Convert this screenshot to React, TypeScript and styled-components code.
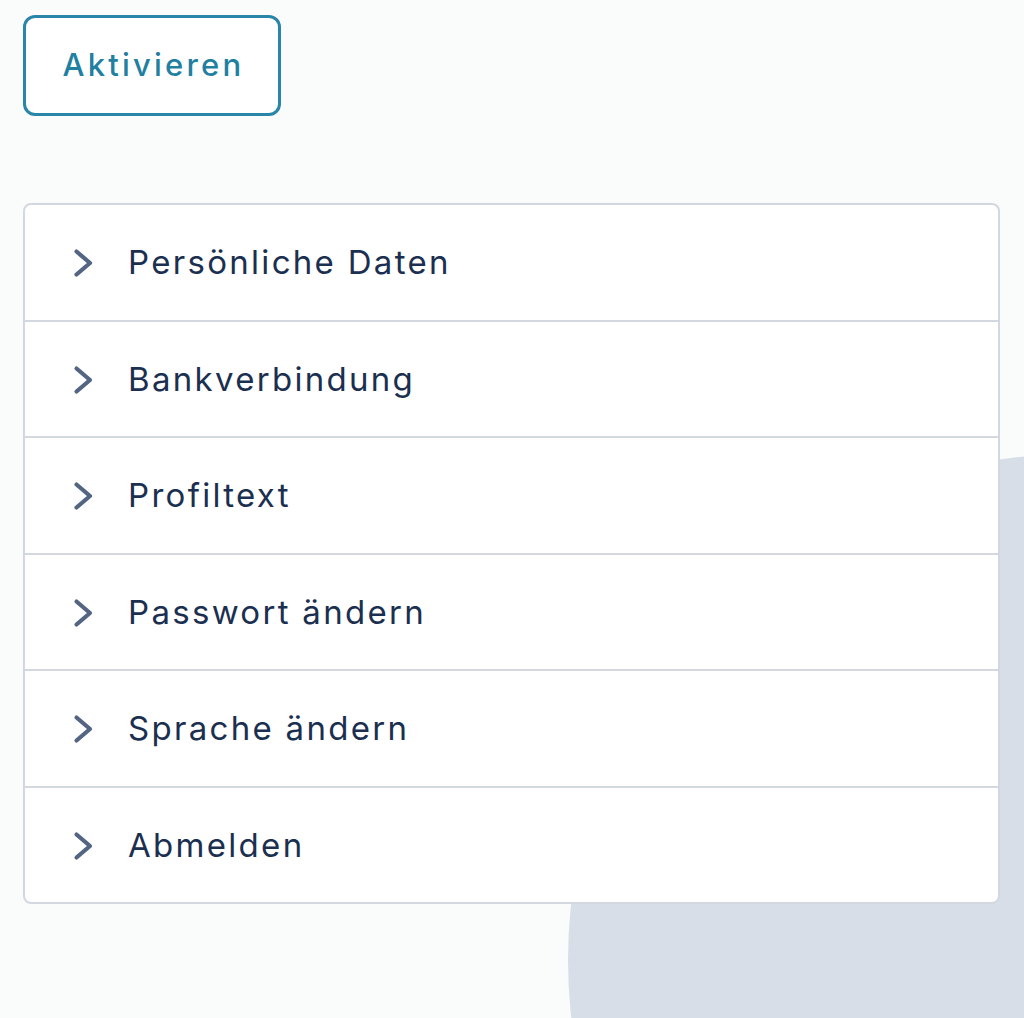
import React from "react";
import styled, { createGlobalStyle } from "styled-components";

const Global = createGlobalStyle`
  html, body { margin: 0; padding: 0; }
  body {
    background: #fafbfb;
    font-family: Inter, "Noto Sans", sans-serif;
    width: 1024px;
    height: 1018px;
    overflow: hidden;
  }
`;

const Page = styled.div`
  position: relative;
  width: 1024px;
  height: 1018px;
  overflow: hidden;
  padding: 15px 24px 0 23px;
  box-sizing: border-box;
  display: flex;
  flex-direction: column;
  align-items: flex-start;
`;

const Blob = styled.div`
  position: absolute;
  left: 568px;
  top: 454px;
  width: 1012px;
  height: 1012px;
  border-radius: 50%;
  background: #d8dee8;
  z-index: 0;
`;

const OutlineButton = styled.button`
  position: relative;
  z-index: 1;
  width: 258px;
  height: 101px;
  box-sizing: border-box;
  border: 3px solid #2a86a8;
  border-radius: 12px;
  background: #ffffff;
  color: #1f80a2;
  font-family: Inter, "Noto Sans", sans-serif;
  font-size: 31px;
  font-weight: 500;
  letter-spacing: 3.2px;
  padding: 0 0 2px 3px;
  cursor: pointer;
`;

const Card = styled.div`
  position: relative;
  z-index: 1;
  margin-top: 87px;
  width: 977px;
  box-sizing: border-box;
  background: #ffffff;
  border: 2px solid #d3d8e0;
  border-radius: 8px;
  display: flex;
  flex-direction: column;
`;

const Row = styled.div<{ $first?: boolean }>`
  height: 114.5px;
  display: flex;
  align-items: center;
  gap: 32px;
  padding-left: 47px;
  border-top: ${(p) => (p.$first ? "none" : "2px solid #d3d8e0")};
`;

const Chevron = styled.svg`
  width: 24px;
  height: 32px;
  flex: none;
  margin-top: 2px;
`;

const Label = styled.span`
  font-family: Inter, "Noto Sans", sans-serif;
  font-size: 33px;
  font-weight: 400;
  letter-spacing: 2.3px;
  color: #1b2f50;
`;

const items = [
  "Persönliche Daten",
  "Bankverbindung",
  "Profiltext",
  "Passwort ändern",
  "Sprache ändern",
  "Abmelden",
];

export default function App() {
  return (
    <>
      <Global />
      <Page>
        <Blob />
        <OutlineButton>Aktivieren</OutlineButton>
        <Card>
          {items.map((t, i) => (
            <Row key={t} $first={i === 0}>
              <Chevron viewBox="0 0 24 32" fill="none">
                <path
                  d="M4.5 4.5 L18 16 L4.5 27.5"
                  stroke="#536582"
                  strokeWidth="4.2"
                  strokeLinecap="round"
                  strokeLinejoin="round"
                />
              </Chevron>
              <Label>{t}</Label>
            </Row>
          ))}
        </Card>
      </Page>
    </>
  );
}
